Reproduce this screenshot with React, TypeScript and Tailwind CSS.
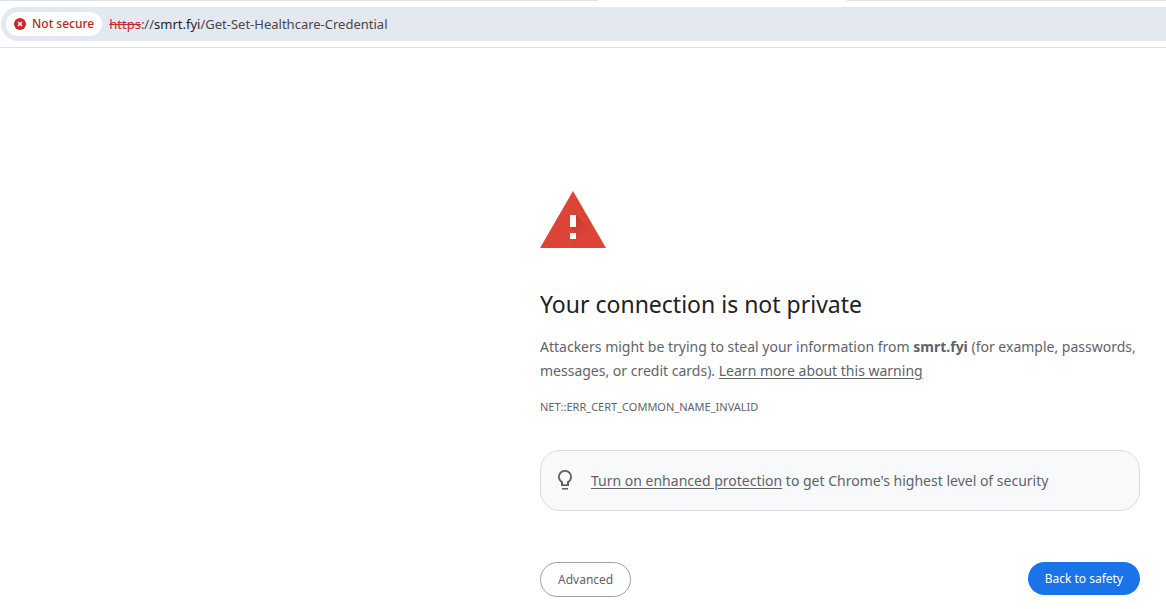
function ErrorDot() {
  return (
    <svg width="12" height="12" viewBox="0 0 12 12" aria-hidden="true">
      <circle cx="6" cy="6" r="6" fill="#c5292a" />
      <path d="M4 4l4 4M8 4L4 8" stroke="#fff" strokeWidth="1.4" />
    </svg>
  );
}

function AddressBar() {
  return (
    <header className="border-b border-[#dfe1e2]">
      <div className="flex h-px">
        <div className="w-[598px] bg-[#dce1ec]" />
        <div className="w-[249px] bg-white" />
        <div className="flex-1 bg-[#dce1ec]" />
      </div>
      <div className="my-1.5 ml-px flex h-[34px] items-center rounded-l-full bg-[#e3e8f1] pl-[5px]">
        <button
          type="button"
          className="flex h-6 items-center gap-1.5 rounded-full bg-white px-2 text-[12px] font-medium text-[#b3261e]"
        >
          <ErrorDot />
          Not secure
        </button>
        <div className="ml-[7px] pt-0.5 text-[13px] whitespace-nowrap text-[#474747]">
          <span className="text-[#c5292a] line-through">https</span>://
          <span className="text-[#1f1f1f]">smrt.fyi</span>/Get-Set-Healthcare-Credential
        </div>
      </div>
    </header>
  );
}

function WarningTriangle() {
  return (
    <svg width="66" height="57" viewBox="0 0 66 57" aria-hidden="true">
      <defs>
        <linearGradient id="shade" x1="32" y1="26" x2="48" y2="42" gradientUnits="userSpaceOnUse">
          <stop offset="0" stopColor="#7a1f17" stopOpacity="0.28" />
          <stop offset="1" stopColor="#7a1f17" stopOpacity="0" />
        </linearGradient>
      </defs>
      <path d="M33 0l33 57H0z" fill="#db4437" />
      <path d="M36 24l16 16 14 17H39l-9-9 6-6-6-6z" fill="url(#shade)" />
      <path d="M30 24h6v12h-6zM30 42h6v6h-6z" fill="#fff" />
    </svg>
  );
}

function BulbIcon() {
  return (
    <svg width="24" height="24" viewBox="0 0 24 24" fill="#5f6368" aria-hidden="true">
      <path d="M9 19h6v1.5H9zM12 1a7 7 0 0 0-4 12.7V17h8v-3.3A7 7 0 0 0 12 1zm2.8 11.1-.8.6v2.5h-4v-2.5l-.8-.6a5.15 5.15 0 1 1 5.6 0z" />
    </svg>
  );
}

export default function App() {
  return (
    <div className="bg-white font-['Noto_Sans',sans-serif] text-[#5f6368]">
      <AddressBar />
      <main className="mr-[26px] ml-auto max-w-[600px] pt-[143px] pb-3">
        <WarningTriangle />
        <h1 className="mt-10 text-[23px] leading-8 text-[#202124]">Your connection is not private</h1>
        <p className="mt-[15px] text-[14px] leading-6">
          Attackers might be trying to steal your information from{' '}
          <strong className="font-bold">smrt.fyi</strong> (for example, passwords, messages, or
          credit cards).{' '}
          <a href="#learn-more" className="underline underline-offset-2">
            Learn more about this warning
          </a>
        </p>
        <p className="mt-3 text-[11px] leading-6">NET::ERR_CERT_COMMON_NAME_INVALID</p>
        <div className="mt-[31px] flex h-[61px] items-center gap-3.5 rounded-[20px] border border-[#dadce0] bg-[#f8f9fb] px-3 text-[14px] leading-6">
          <BulbIcon />
          <p>
            <a href="#enhanced-protection" className="underline underline-offset-2">
              Turn on enhanced protection
            </a>{' '}
            to get Chrome's highest level of security
          </p>
        </div>
        <div className="mt-[51px] flex items-start justify-between text-[12px]">
          <button type="button" className="h-[35px] rounded-full border border-[#9aa0a6] px-[17px]">
            Advanced
          </button>
          <button type="button" className="h-[33px] rounded-full bg-[#1a73e8] px-[17px] text-white">
            Back to safety
          </button>
        </div>
      </main>
    </div>
  );
}
